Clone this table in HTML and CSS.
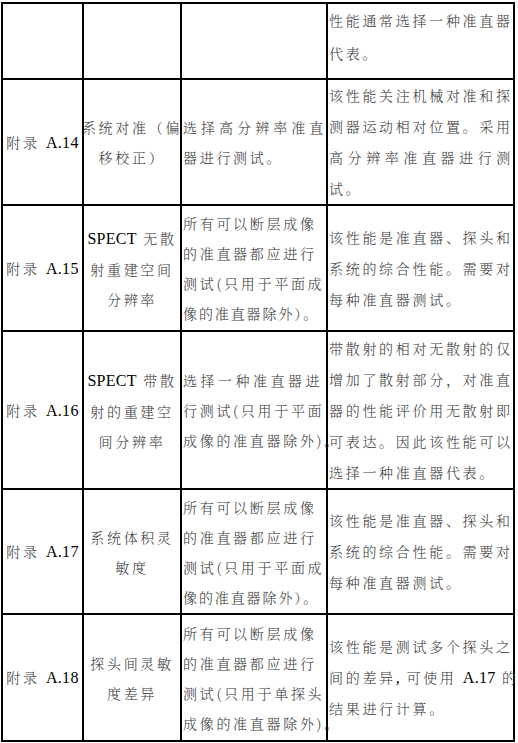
FILE: index.html
```html
<!DOCTYPE html>
<html lang="zh-CN">
<head>
<meta charset="utf-8">
<title>准直器测试</title>
<link rel="stylesheet" href="styles.css">
</head>
<body>
<div class="sheet">
  <div class="cell c1"></div>
  <div class="cell c2"></div>
  <div class="cell c3"></div>
  <div class="cell c4 top"><span class="ln">性能通常选择一种准直器</span><span class="ln">代表。</span></div>

  <div class="cell c1"><span class="ln">附录 <span class="lat">A.14</span></span></div>
  <div class="cell c2"><span class="ln">系统对准（偏</span><span class="ln">移校正）</span></div>
  <div class="cell c3"><span class="ln fill">选择高分辨率准直</span><span class="ln">器进行测试。</span></div>
  <div class="cell c4"><span class="ln">该性能关注机械对准和探</span><span class="ln">测器运动相对位置。采用</span><span class="ln fill">高分辨率准直器进行测</span><span class="ln">试。</span></div>

  <div class="cell c1"><span class="ln">附录 <span class="lat">A.15</span></span></div>
  <div class="cell c2"><span class="ln"><span class="lat">SPECT</span> 无散</span><span class="ln">射重建空间</span><span class="ln">分辨率</span></div>
  <div class="cell c3"><span class="ln">所有可以断层成像</span><span class="ln">的准直器都应进行</span><span class="ln">测试(只用于平面成</span><span class="ln tight">像的准直器除外）。</span></div>
  <div class="cell c4"><span class="ln">该性能是准直器、探头和</span><span class="ln">系统的综合性能。需要对</span><span class="ln">每种准直器测试。</span></div>

  <div class="cell c1"><span class="ln">附录 <span class="lat">A.16</span></span></div>
  <div class="cell c2"><span class="ln"><span class="lat">SPECT</span> 带散</span><span class="ln">射的重建空</span><span class="ln">间分辨率</span></div>
  <div class="cell c3"><span class="ln wide">选择一种准直器进</span><span class="ln">行测试(只用于平面</span><span class="ln">成像的准直器除外)。</span></div>
  <div class="cell c4"><span class="ln">带散射的相对无散射的仅</span><span class="ln">增加了散射部分，对准直</span><span class="ln">器的性能评价用无散射即</span><span class="ln">可表达。因此该性能可以</span><span class="ln">选择一种准直器代表。</span></div>

  <div class="cell c1"><span class="ln">附录 <span class="lat">A.17</span></span></div>
  <div class="cell c2"><span class="ln">系统体积灵</span><span class="ln">敏度</span></div>
  <div class="cell c3"><span class="ln">所有可以断层成像</span><span class="ln">的准直器都应进行</span><span class="ln">测试(只用于平面成</span><span class="ln tight">像的准直器除外）。</span></div>
  <div class="cell c4"><span class="ln">该性能是准直器、探头和</span><span class="ln">系统的综合性能。需要对</span><span class="ln">每种准直器测试。</span></div>

  <div class="cell c1"><span class="ln">附录 <span class="lat">A.18</span></span></div>
  <div class="cell c2"><span class="ln">探头间灵敏</span><span class="ln">度差异</span></div>
  <div class="cell c3"><span class="ln">所有可以断层成像</span><span class="ln">的准直器都应进行</span><span class="ln">测试(只用于单探头</span><span class="ln">成像的准直器除外)。</span></div>
  <div class="cell c4"><span class="ln">该性能是测试多个探头之</span><span class="ln fill">间的差异<span class="lat">,</span> 可使用 <span class="lat">A.17</span> 的</span><span class="ln">结果进行计算。</span></div>
</div>
</body>
</html>
```
FILE: styles.css
```css
html, body {
  margin: 0;
  padding: 0;
  background: #fff;
}

body {
  font-family: "Noto Serif CJK SC", "Noto Sans CJK SC", sans-serif;
}

.sheet {
  box-sizing: border-box;
  width: 514px;
  margin: 2px 0 0 1px;
  display: grid;
  grid-template-columns: 81px 98px 146px 187px;
  grid-template-rows: 76px 126px 126px 158px 125px 127px;
  border-left: 2px solid #000;
  border-top: 2px solid #000;
}

.cell {
  box-sizing: border-box;
  border-right: 2px solid #000;
  border-bottom: 2px solid #000;
  display: flex;
  flex-direction: column;
  justify-content: center;
  padding: 0 0 0 1px;
  font-size: 14px;
  line-height: 30px;
  letter-spacing: 2.7px;
  color: #3c3c3c;
  font-weight: 300;
  white-space: nowrap;
  overflow: visible;
}

.c1, .c2 {
  align-items: center;
  text-align: center;
  padding: 0;
}

.c4 {
  line-height: 31px;
}

.top {
  justify-content: flex-start;
  line-height: 33px;
}

.ln {
  display: block;
}

.fill {
  text-align: justify;
  text-align-last: justify;
}

.tight {
  letter-spacing: 1.9px;
}

.wide {
  letter-spacing: 3.5px;
}

.lat {
  font-family: "Liberation Serif", serif;
  font-size: 16px;
  letter-spacing: 0.3px;
  color: #000;
  font-weight: 400;
}
```
